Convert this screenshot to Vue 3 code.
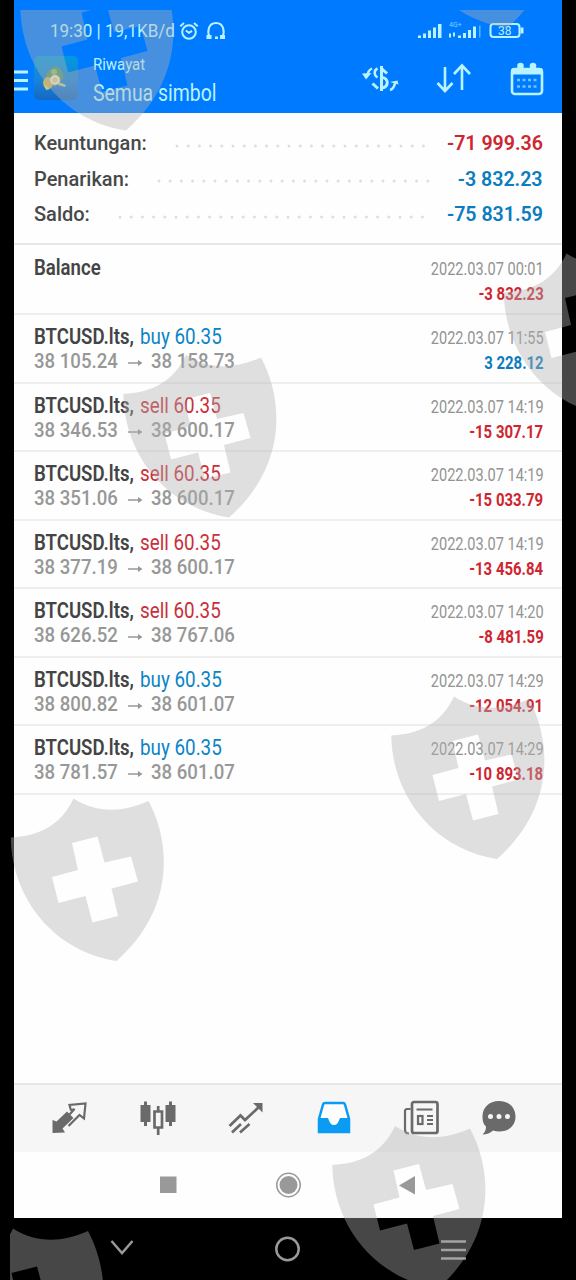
<script setup>
const summary = [
  { label: 'Keuntungan:', value: '-71 999.36', type: 'loss' },
  { label: 'Penarikan:', value: '-3 832.23', type: 'gain' },
  { label: 'Saldo:', value: '-75 831.59', type: 'gain' }
]

const deals = [
  { side: 'buy', from: '38 105.24', to: '38 158.73', date: '2022.03.07 11:55', profit: '3 228.12' },
  { side: 'sell', from: '38 346.53', to: '38 600.17', date: '2022.03.07 14:19', profit: '-15 307.17' },
  { side: 'sell', from: '38 351.06', to: '38 600.17', date: '2022.03.07 14:19', profit: '-15 033.79' },
  { side: 'sell', from: '38 377.19', to: '38 600.17', date: '2022.03.07 14:19', profit: '-13 456.84' },
  { side: 'sell', from: '38 626.52', to: '38 767.06', date: '2022.03.07 14:20', profit: '-8 481.59' },
  { side: 'buy', from: '38 800.82', to: '38 601.07', date: '2022.03.07 14:29', profit: '-12 054.91' },
  { side: 'buy', from: '38 781.57', to: '38 601.07', date: '2022.03.07 14:29', profit: '-10 893.18' }
]

const shields = [
  [10, -830.5],
  [391, -933],
  [493.5, -545],
  [113, -443.5],
  [381, -102],
  [0.5, 0],
  [322, 327.5],
  [-60, 430]
]

const profitType = (profit) => {
  return profit.startsWith('-') ? 'loss' : 'gain'
}
</script>

<template>
  <div class="screen">
    <div class="phone">
      <header class="top">
        <div class="status">
          <span class="clock">19:30 | 19,1KB/d</span>
          <svg class="alarm" width="20" height="20" viewBox="0 0 20 20">
            <circle cx="10" cy="11" r="6.8" />
            <path d="M6.8 9.5l3.2 2.3 3-2M1.3 5.2L5 2M18.7 5.2L15 2" />
          </svg>
          <svg class="phones" width="20" height="20" viewBox="0 0 20 20">
            <path d="M3.5 15.5C1.5 12 1.5 2 10 2s8.500 10 6.500 13.500" />
            <path class="fill" d="M.5 14h5v4h-5zM9 15.500h3v2.500H9zM14 14h5v4h-5z" />
          </svg>
          <svg class="signal" width="108" height="22" viewBox="0 0 108 22">
            <path class="fill" d="M1 15.500h3V18H1zM6 13.500h3V18H6zM11 10.500h3V18h-3zM16 7.500h3V18h-3zM21 4h3.500v14H21z" />
            <path class="fill" d="M32 13.500h2v4h-2zM36 12.500h2v4h-2zM41 15.500h3V18h-3zM46 13h3v5h-3zM51 10h3v8h-3zM56 6.500h3V18h-3z" />
            <path class="faint" d="M62 5.500h1.500v12H62z" />
            <text class="net" x="32" y="7">4G+</text>
            <rect x="73.500" y="4" width="29" height="13" rx="3" />
            <path class="fill" d="M103.500 7.500h3v6h-3z" />
            <text class="power" x="81" y="15">38</text>
          </svg>
        </div>
        <div class="bar">
          <svg class="burger" width="15" height="24" viewBox="0 0 15 24">
            <path d="M0 3h14M0 11.500h14M0 20h14" />
          </svg>
          <svg class="logo" width="48" height="48" viewBox="0 0 48 48">
            <defs>
              <linearGradient id="logoFill" x1="0" y1="0" x2="0" y2="1">
                <stop offset="0" stop-color="#009ae0" />
                <stop offset="0.550" stop-color="#1a82d8" />
                <stop offset="1" stop-color="#1468c4" />
              </linearGradient>
            </defs>
            <rect x="2" y="2" width="44" height="44" rx="5" fill="url(#logoFill)" />
            <path d="M14 24c0-6 4-9 9-12 7 3 9 8 8 13l-8 8-9-2z" fill="#4f9a6c" />
            <ellipse cx="16" cy="29" rx="5" ry="6" fill="#c9b45c" />
            <circle cx="22" cy="18" r="3" fill="#8fb970" />
            <circle cx="23" cy="26" r="5" fill="#f0e8c0" />
            <circle cx="23" cy="26" r="2.500" fill="#cfc9a4" />
            <path d="M27 28l7 3-1 2-7-2zM12 30l6 5-4 1z" fill="#bcc9a0" />
          </svg>
          <div class="titles">
            <span class="subtitle">Riwayat</span>
            <span class="title">Semua simbol</span>
          </div>
          <svg class="tool dollar" width="38" height="32" viewBox="0 0 38 32">
            <path d="M19.500 3v25M25 10.500l-5.500-5M20 14.500c7 .5 7 9.500 0 10.500M10.500 20.500l5.500 5" />
            <path class="thin" d="M15.500 5.500c-3.500 1.500-4 6.500 0 9M10 5.500C7 7 5.500 9 5.500 13M28 27c3-1 4.500-4 5-7" />
            <path class="fill" d="M0 10.500l9.500-.5-5.500 6.500zM36.500 21.500L28 19l7.500-1.500z" />
          </svg>
          <svg class="tool sort" width="36" height="32" viewBox="0 0 36 32">
            <path d="M10 4v23.500M2.500 20l7.500 8 7.500-8M27 27V3M19 11l8-8.500 8 8.500" />
          </svg>
          <svg class="tool calendar" width="34" height="34" viewBox="0 0 34 34">
            <rect x="2" y="7" width="30" height="25" rx="3" />
            <path class="fill" d="M1 8c0-1 1-2 2-2h28c1 0 2 1 2 2v4.500H1z" />
            <circle class="fill" cx="10.500" cy="4" r="3.300" />
            <circle class="fill" cx="23" cy="4" r="3.300" />
            <path class="days" d="M7 18h20M7 24.500h20" />
          </svg>
        </div>
      </header>

      <section class="summary">
        <div v-for="row in summary" :key="row.label" class="sumRow">
          <span>{{ row.label }}</span>
          <svg class="dots" height="4">
            <line x1="2" y1="2" x2="100%" y2="2" />
          </svg>
          <span class="total" :class="row.type">{{ row.value }}</span>
        </div>
      </section>

      <section class="deals">
        <div class="deal first">
          <div class="left">
            <div class="name"><b>Balance</b></div>
          </div>
          <div class="right">
            <div class="date">2022.03.07 00:01</div>
            <div class="profit loss">-3 832.23</div>
          </div>
        </div>
        <div v-for="(deal, i) in deals" :key="i" class="deal">
          <div class="left">
            <div class="name">
              <b>BTCUSD.lts,</b>
              <span :class="deal.side">{{ deal.side }} 60.35</span>
            </div>
            <div class="prices">
              <span>{{ deal.from }}</span>
              <svg width="15" height="10" viewBox="0 0 15 10">
                <path d="M0 5h12" />
                <path class="head" d="M10 2l4.500 3-4.500 3z" />
              </svg>
              <span>{{ deal.to }}</span>
            </div>
          </div>
          <div class="right">
            <div class="date">{{ deal.date }}</div>
            <div class="profit" :class="profitType(deal.profit)">{{ deal.profit }}</div>
          </div>
        </div>
      </section>

      <nav class="tabs">
        <svg width="36" height="34" viewBox="0 0 36 34">
          <path class="line" d="M20 9.500l-1.500-5.500L34.500 2.500 33 17.500l-4.500-3.500L17.500 25M20 9.500l3.500-1.500-5 5.500" />
          <path class="solid" d="M1.500 19l4 1.500L16 10.500l6.500 6.500L11.500 27.500l2.500 4-12.500.5z" />
        </svg>
        <svg width="38" height="36" viewBox="0 0 38 36">
          <path class="solid" d="M1.500 5H5V1.500h3V5h3.500v17H8v4H5v-4H1.500zM26.500 5H30V1.500h3V5h3.500v17H33v4h-3v-4h-3.500z" />
          <path class="line thick" d="M15.500 11.500h7.500v16h-7.500zM19.200 11.500V6M19.200 28v7" />
        </svg>
        <svg width="36" height="34" viewBox="0 0 36 34">
          <path class="line thick" d="M1.500 25L12.500 14.500l4.500 4.500L32 5M4 31.500l9-8.500M12 31.500l9.500-8.500" />
          <path class="solid" d="M25 2h9.500v9.500z" />
        </svg>
        <svg width="36" height="34" viewBox="0 0 36 34">
          <path class="inboxLine" d="M3 18L7 3.500c.3-1 1-1.500 2-1.500h18c1 0 1.700.5 2 1.500L33 18v13H3z" />
          <path class="inbox" d="M2 17h9.500c1.500 0 1.500 7 6.500 7s5-7 6.500-7H34v15H2z" />
        </svg>
        <svg width="36" height="36" viewBox="0 0 36 36">
          <path class="line" d="M7.500 9H4c-1.500 0-2 1-2 2.500V30c0 3 1.500 3.500 4 3.500" />
          <rect class="line thick" x="9" y="2" width="25.500" height="31" rx="2" />
          <path class="line" d="M13.500 9.500h16M24 16h6M24 20h6M24 24h6" />
          <rect class="line" x="15" y="16" width="4.500" height="8" />
        </svg>
        <svg class="chat" width="36" height="36" viewBox="0 0 36 36">
          <path class="solid" d="M18 1c10 0 16.500 6.500 16.500 15.500S28 31.500 18 31.500c-2 0-4-.3-6-1-3 2.500-6 4-10.500 4C4 32 5 30 5 26.500 2 24 1.500 20.500 1.500 16.500 1.500 7.500 8 1 18 1z" />
          <circle cx="9.500" cy="16.500" r="2.500" fill="#f6f6f6" />
          <circle cx="18" cy="16.500" r="2.500" fill="#f6f6f6" />
          <circle cx="26.500" cy="16.500" r="2.500" fill="#f6f6f6" />
        </svg>
      </nav>

      <div class="keys">
        <svg width="18" height="18" viewBox="0 0 18 18"><path d="M1 .5h16.500V17H1z" /></svg>
        <svg width="26" height="26" viewBox="0 0 26 26">
          <circle class="ring" cx="13.500" cy="13" r="11.700" />
          <circle cx="13.500" cy="13" r="9" />
        </svg>
        <svg width="18" height="20" viewBox="0 0 18 20"><path d="M1 10.500L17 1v18.500z" /></svg>
      </div>
    </div>

    <div class="system">
      <svg width="24" height="18" viewBox="0 0 24 18"><path d="M1.500 1L12 13 22.500 1" /></svg>
      <svg width="26" height="26" viewBox="0 0 26 26"><circle cx="13.500" cy="13" r="11.200" /></svg>
      <svg width="27" height="22" viewBox="0 0 27 22"><path d="M1 3.500h25M1 12h25M1 20.500h25" /></svg>
    </div>

    <svg class="watermark" width="576" height="1280" viewBox="0 0 576 1280">
      <defs>
        <clipPath id="area"><rect x="10" y="10" width="566" height="1270" /></clipPath>
      </defs>
      <g clip-path="url(#area)">
        <path
          v-for="(pos, i) in shields"
          :key="i"
          :transform="`translate(${pos[0]} ${pos[1]})`"
          fill-rule="evenodd"
          d="M10.300 837.500C38 836 60 826 73 798.500C96 813 121 813 148 801C171 844 174 910 116 961C52 951 11 897 10.300 837.500ZM71.500 843L77.500 870L51.500 877L58 903L85 896L92 922.500L117.500 916L111 888.500L137.500 881.500L130.500 856.500L104 862.500L97 836.500Z"
        />
      </g>
    </svg>
  </div>
</template>

<style>
body {
  margin: 0;
  background: #000;
}
</style>

<style scoped>
.screen {
  position: relative;
  width: 576px;
  height: 1280px;
  overflow: hidden;
  background: #000;
  font-family: Roboto, "Liberation Sans", sans-serif;
}

svg {
  display: block;
  flex-shrink: 0;
}

.phone {
  display: flex;
  flex-direction: column;
  width: 548px;
  height: 1218px;
  margin-left: 14px;
  background: #fdfefd;
}

.top {
  height: 113px;
  background: #007bff;
  color: #b9f3ff;
}

.top svg {
  fill: none;
  stroke: #b9f3ff;
  stroke-width: 2;
}

.top .fill {
  fill: #b9f3ff;
  stroke: none;
}

.status {
  display: flex;
  align-items: center;
  height: 22px;
  padding: 20px 37px 0 36px;
}

.clock {
  width: 128.5px;
  font-size: 18px;
  line-height: 22px;
  white-space: nowrap;
  transform: scaleX(0.945);
  transform-origin: left;
}

.phones {
  margin-left: 7px;
}

.signal {
  margin-left: auto;
}

.signal text {
  fill: #b9f3ff;
  stroke: none;
}

.signal .net {
  font-size: 7px;
  opacity: 0.7;
}

.signal .power {
  font-size: 12px;
}

.signal .faint {
  fill: #4db8ff;
  stroke: none;
}

.bar {
  display: flex;
  align-items: center;
  height: 64px;
  padding-right: 18px;
}

.top .burger {
  margin-top: 14px;
  stroke-width: 3;
}

.logo {
  margin: 8px 0 0 3px;
}

.top .logo {
  stroke: none;
}

.titles {
  display: flex;
  flex-direction: column;
  width: 265px;
  margin: 12px 0 0 13px;
}

.subtitle {
  font-size: 17px;
  line-height: 22px;
  transform: scaleX(0.88);
  transform-origin: left;
}

.title {
  margin-top: 3px;
  font-size: 24px;
  line-height: 30px;
  transform: scaleX(0.81);
  transform-origin: left;
}

.tool {
  margin-top: 10px;
}

.top .dollar {
  margin-left: 4px;
  stroke-width: 3;
}

.top .dollar .thin {
  stroke-width: 2.5;
}

.top .sort {
  margin-left: 35px;
  stroke-width: 2.6;
}

.top .calendar {
  margin-left: auto;
  stroke-width: 2.6;
}

.top .calendar .days {
  stroke-width: 2.5;
  stroke-dasharray: 3 2.5;
  opacity: 0.6;
}

.summary {
  display: flex;
  flex-direction: column;
  box-sizing: border-box;
  height: 132px;
  padding: 12.5px 19px 0 20px;
  border-bottom: 2px solid #e8e8e8;
  color: #484848;
}

.sumRow {
  display: flex;
  align-items: center;
  height: 35.5px;
  font-size: 20px;
  font-weight: 500;
  white-space: nowrap;
}

.dots {
  flex: 1;
  width: 0;
  margin: 5px 18px 0 28px;
}

.dots line {
  stroke: #dedede;
  stroke-width: 3;
  stroke-linecap: round;
  stroke-dasharray: 0 11.2;
}

.gain {
  color: #0b7cc0;
}

.loss {
  color: #cf2531;
}

.total {
  font-weight: 600;
  transform: scaleX(0.98);
  transform-origin: right;
}

.deal {
  display: flex;
  justify-content: space-between;
  box-sizing: border-box;
  height: 68.55px;
  padding: 9px 18.5px 0 20px;
  border-bottom: 2px solid #eee;
  white-space: nowrap;
}

.deal.first {
  height: 70px;
  padding-top: 10px;
}

.name {
  display: flex;
  height: 25px;
  font-size: 21.5px;
  line-height: 26px;
  color: #444;
}

.name b {
  width: 105.500px;
  font-weight: 600;
  transform: scaleX(0.865);
  transform-origin: left;
}

.name span {
  transform: scaleX(0.875);
  transform-origin: left;
}

.name .buy {
  color: #0b84c6;
}

.name .sell {
  color: #c9303a;
}

.prices {
  display: flex;
  align-items: center;
  height: 24px;
  color: #979797;
  font-size: 20px;
  font-weight: 500;
  line-height: 24px;
}

.prices span {
  width: 84px;
  transform: scaleX(0.93);
  transform-origin: left;
}

.prices svg {
  margin: 4px 8px 0 10px;
  stroke: #979797;
  stroke-width: 1.5;
}

.prices .head {
  fill: #979797;
  stroke: none;
}

.right {
  display: flex;
  flex-direction: column;
  align-items: flex-end;
}

.date {
  height: 25px;
  padding-top: 2px;
  box-sizing: border-box;
  color: #939393;
  font-size: 18px;
  line-height: 24px;
  transform: scaleX(0.808);
  transform-origin: right;
}

.profit {
  font-size: 18px;
  font-weight: 700;
  line-height: 27px;
  transform: scaleX(0.83);
  transform-origin: right;
}

.tabs {
  display: flex;
  gap: 51.5px;
  align-items: center;
  box-sizing: border-box;
  height: 69px;
  margin-top: auto;
  padding: 0 0 2px 37px;
  border-top: 2px solid #e8e8e8;
  background: #f6f6f6;
}

.chat {
  margin-left: -10px;
}

.line {
  fill: none;
  stroke: #6a6a6a;
  stroke-width: 2.2;
}

.thick {
  stroke-width: 2.7;
}

.solid {
  fill: #6a6a6a;
}

.inboxLine {
  fill: #fdfefd;
  stroke: #0b9bf3;
  stroke-width: 2.5;
}

.inbox {
  fill: #0b9bf3;
}

.keys {
  display: flex;
  justify-content: space-between;
  align-items: center;
  height: 66px;
  padding: 0 146px 0 145px;
  fill: #999;
}

.ring {
  fill: none;
  stroke: #999;
  stroke-width: 1.6;
}

.system {
  display: flex;
  justify-content: space-between;
  align-items: center;
  height: 62px;
  padding: 0 109px 0 110px;
  fill: none;
  stroke: #999;
  stroke-width: 2.5;
}

.watermark {
  position: absolute;
  top: 0;
  left: 0;
  fill: rgba(177, 177, 177, 0.4);
  pointer-events: none;
}
</style>
